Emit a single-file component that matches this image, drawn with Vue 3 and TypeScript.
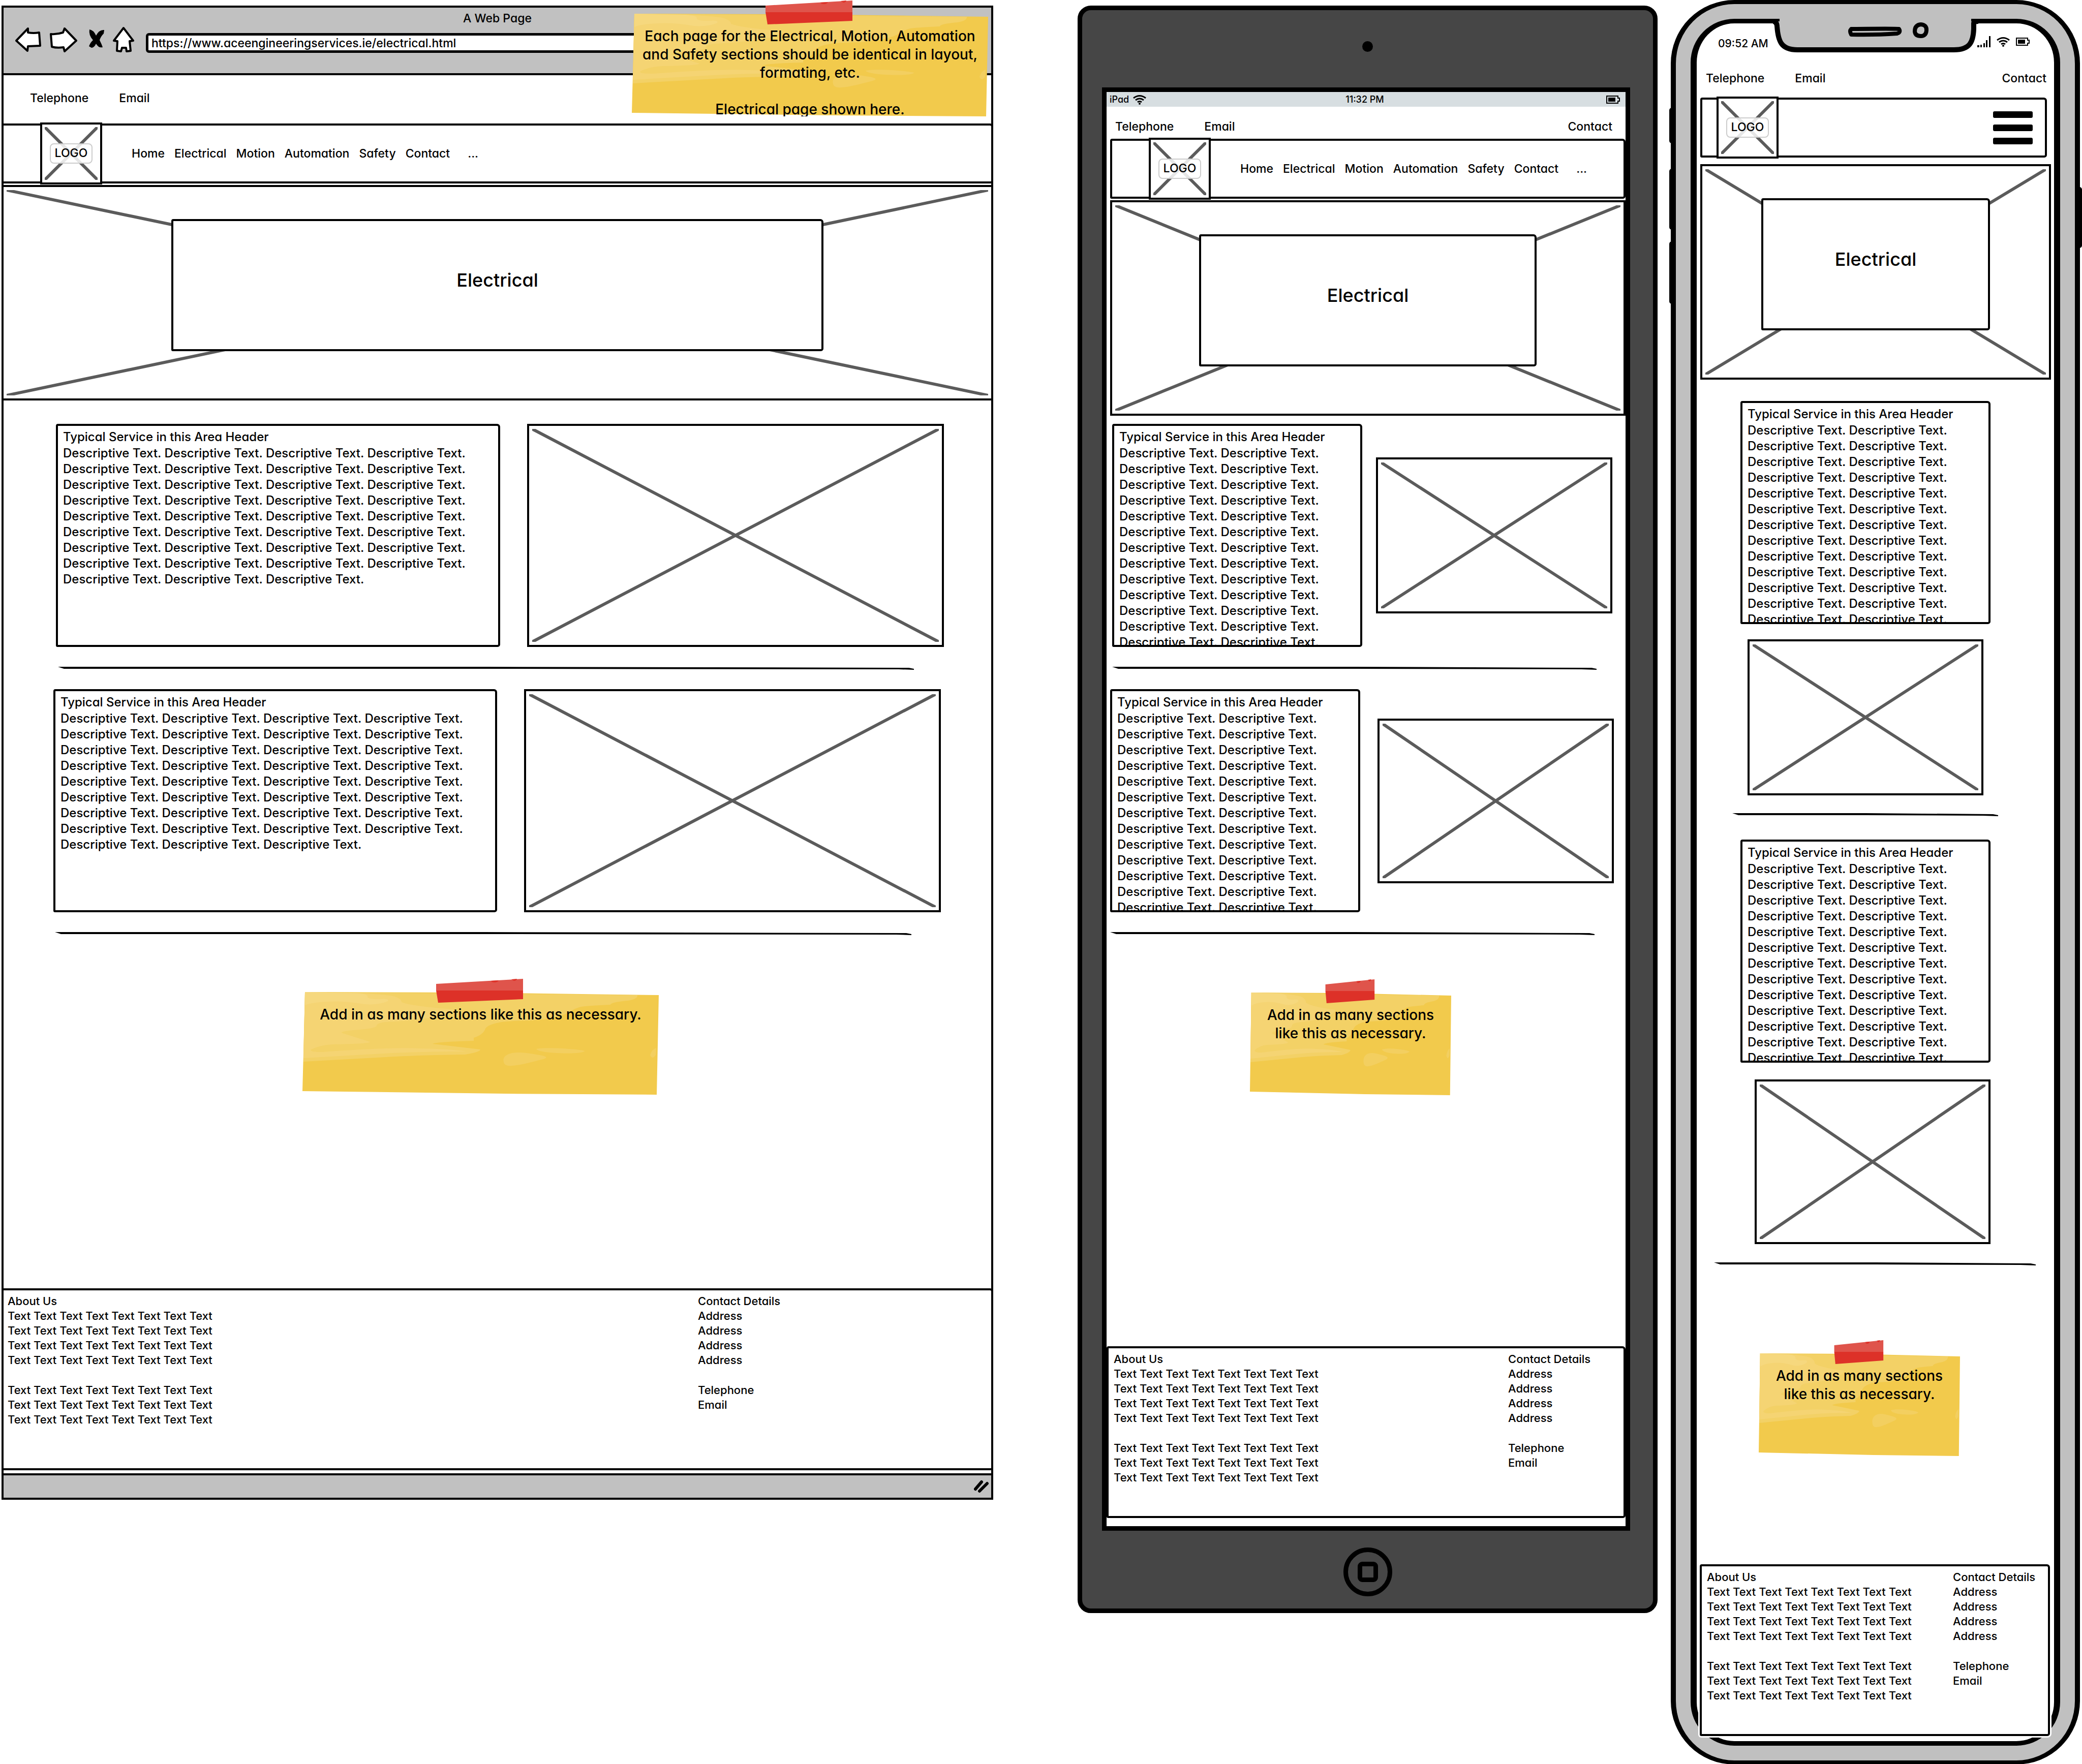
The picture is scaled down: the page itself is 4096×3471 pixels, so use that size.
<script setup lang="ts">
type Kind = 'browser' | 'tablet' | 'phone'

interface Device {
  kind: Kind
  label: string
  description: string
}

const repeat = (text: string, times: number): string => Array<string>(times).fill(text).join(' ')

const devices: Device[] = [
  { kind: 'browser', label: 'Desktop layout', description: repeat('Descriptive Text.', 35) },
  { kind: 'tablet', label: 'Tablet layout', description: repeat('Descriptive Text.', 26) },
  { kind: 'phone', label: 'Phone layout', description: repeat('Descriptive Text.', 26) },
]

const navLinks: string[] = ['Home', 'Electrical', 'Motion', 'Automation', 'Safety', 'Contact']
const services: number[] = [1, 2]
const textLine: string = repeat('Text', 8)
const aboutBlocks: string[][] = [
  [textLine, textLine, textLine, textLine],
  [textLine, textLine, textLine],
]
const contactBlocks: string[][] = [
  ['Address', 'Address', 'Address', 'Address'],
  ['Telephone', 'Email'],
]

// Layers of a sticky note: paper, its sheen, then the tape that holds it.
const noteLayers: { fill: string; d: string }[] = [
  { fill: '#f2ca4c', d: 'M5 0L320 1L701 6L697 202L400 200L0 195L2 120Z' },
  {
    fill: '#f3d166',
    d: 'M5 0L659 6Q660 14 640 17Q606 20 606 25Q560 27 548 29C520 36 530 50 449 56Q395 57 387 60Q365 64 360 72Q356 84 337 90L337 96Q262 98 256 102Q300 107 350 113Q350 118 320 123Q240 124 182 127L2 137Z',
  },
  {
    fill: '#f5d473',
    d: 'M5 0L106 2Q170 5 182 9Q196 14 195 20Q215 28 298 34Q290 52 164 59Q146 61 146 66Q146 72 100 75Q70 78 79 81L133 98Q132 102 60 103Q36 104 17 113Q12 118 40 118Q180 108 230 111Q290 112 322 117Q230 117 160 121L2 130Z',
  },
  {
    fill: '#f6d87e',
    d: 'M5 0L106 2Q128 4 128 8Q126 14 150 14Q172 12 168 18Q150 26 122 24Q80 17 50 19Q20 20 5 26Z',
  },
  {
    fill: '#f3cf60',
    d: 'M396 138C392 124 410 116 440 120C478 125 490 128 470 133C450 138 430 144 412 145C402 146 397 143 396 138ZM460 112C480 108 540 112 556 116C548 121 530 121 500 120Q464 118 460 112ZM684 124Q688 112 696 110L695 124Q688 134 684 124Z',
  },
  { fill: '#df544b', d: 'M263 -16L434 -26V-3H263Z' },
  { fill: '#dd3128', d: 'M263 -3H434V14L267 21Z' },
  { fill: '#dd3128', d: 'M371 -22L386 -23Q384 -19 378 -19Q372 -19 371 -22ZM411 -25L422 -26Q421 -22 416 -22Z' },
]
</script>

<template>
  <main class="board">
    <article v-for="d in devices" :key="d.kind" :class="['device', d.kind]" :aria-label="d.label">
      <header v-if="d.kind === 'browser'" class="chrome">
        <div class="title">A Web Page</div>
        <div class="toolbar">
          <button type="button" aria-label="Back">
            <svg width="51" height="52" class="tool"><path d="M2 28L25 4L25 12Q36 14 47 12L49 38L25 39L24 48Z" /></svg>
          </button>
          <button type="button" aria-label="Forward">
            <svg width="54" height="52" class="tool"><path d="M2 15Q14 16 26 12L29 4L52 28L29 49L27 41Q14 43 4 40Z" /></svg>
          </button>
          <button type="button" aria-label="Stop">
            <svg width="36" height="52">
              <path d="M7 6Q15 7 20 18Q26 6 36 7L35 14Q29 20 27 27Q31 35 33 41Q25 43 20 34Q16 42 11 42L6 39Q9 31 14 27Q5 17 7 6Z" />
            </svg>
          </button>
          <button type="button" aria-label="Home">
            <svg width="42" height="52" class="tool">
              <path d="M21 3L40 28L33 29L35 48L27 49L26 42L18 42L16 49L8 48L9 29L2 28Z" />
            </svg>
          </button>
          <input class="url" type="text" aria-label="Address" value="https://www.aceengineeringservices.ie/electrical.html" />
        </div>
      </header>

      <div v-if="d.kind === 'tablet'" class="bezel">
        <span class="lens"></span>
      </div>

      <template v-if="d.kind === 'phone'">
        <span class="key mute"></span>
        <span class="key louder"></span>
        <span class="key softer"></span>
        <span class="key power"></span>
      </template>

      <div class="screen">
        <svg v-if="d.kind === 'phone'" class="notch" width="400" height="70" viewBox="0 0 400 70">
          <path class="notch-fill" d="M6 5V20C8 44 14 61 46 61H354C386 61 393 45 393 20V5Z" />
          <path class="notch-line" d="M-2 5Q5 5 6 14C8 44 14 61 46 61H354C386 61 392 45 393 20V9Q393 5 402 5" />
          <path class="notch-fill" d="M11 0H388V16H11Z" />
          <path class="speaker" d="M152 20Q148 24 152 31Q200 32 242 29Q250 27 246 20Q240 19 152 20Z" />
          <path class="speaker" d="M289 11Q301 12 300 23Q299 34 289 34Q278 34 277 25Q277 12 289 11Z" />
        </svg>

        <div v-if="d.kind !== 'browser'" class="status">
          <span v-if="d.kind === 'tablet'" class="carrier">
            iPad
            <svg width="28" height="20" viewBox="0 0 28 20" class="wifi">
              <path d="M2 7Q14 -2 26 7M6 11Q14 5 22 11M10 15Q14 12 18 15" /><circle cx="14" cy="18" r="2" />
            </svg>
          </span>
          <time>{{ d.kind === 'tablet' ? '11:32 PM' : '09:52 AM' }}</time>
          <span class="signals">
            <template v-if="d.kind === 'phone'">
              <svg width="26" height="22" viewBox="0 0 26 22">
                <path d="M0 18H4V22H0ZM6 17H9V22H6ZM12 14H15V22H12ZM17 8H20V22H17ZM23 0H26V22H23Z" />
              </svg>
              <svg width="28" height="20" viewBox="0 0 28 20" class="wifi">
                <path d="M2 7Q14 -2 26 7M6 11Q14 5 22 11M10 15Q14 12 18 15" /><circle cx="14" cy="18" r="2" />
              </svg>
            </template>
            <svg width="27" height="16" viewBox="0 0 27 16">
              <path class="shell" d="M1 1H23V5H26V11H23V15H1Z" /><path d="M4 4H18V12H4Z" />
            </svg>
          </span>
        </div>

        <div class="contact-bar">
          <a href="#telephone">Telephone</a>
          <a href="#email">Email</a>
          <a v-if="d.kind !== 'browser'" class="to-right" href="#contact">Contact</a>
        </div>

        <nav class="box nav">
          <div class="logo">
            <svg class="cross" viewBox="0 0 100 100" preserveAspectRatio="none">
              <path d="M0 0L100 100M100 0L0 100" vector-effect="non-scaling-stroke" />
            </svg>
            <span class="logo-label">LOGO</span>
          </div>
          <button v-if="d.kind === 'phone'" type="button" class="menu" aria-label="Menu">
            <span></span><span></span><span></span>
          </button>
          <div v-else class="links">
            <a v-for="link in navLinks" :key="link" :href="'#' + link.toLowerCase()">{{ link }}</a>
            <a class="more" href="#more">...</a>
          </div>
        </nav>

        <section class="hero">
          <svg class="cross" viewBox="0 0 100 100" preserveAspectRatio="none">
            <path d="M0 0L100 100M100 0L0 100" vector-effect="non-scaling-stroke" />
          </svg>
          <h1 class="box hero-title">Electrical</h1>
        </section>

        <template v-for="n in services" :key="n">
          <section :class="['service', 'service-' + n]">
            <div class="box copy">
              <h2>Typical Service in this Area Header</h2>
              <p>{{ d.description }}</p>
            </div>
            <div class="picture">
              <svg class="cross" viewBox="0 0 100 100" preserveAspectRatio="none">
                <path d="M0 0L100 100M100 0L0 100" vector-effect="non-scaling-stroke" />
              </svg>
            </div>
          </section>
          <hr :class="'rule-' + n" />
        </template>

        <aside class="note">
          <svg viewBox="0 -27 701 229" preserveAspectRatio="none">
            <path v-for="(layer, i) in noteLayers" :key="i" :fill="layer.fill" :d="layer.d" />
          </svg>
          <p>Add in as many sections like this as necessary.</p>
        </aside>

        <footer class="box footer">
          <div class="about">
            <h3>About Us</h3>
            <p v-for="(block, i) in aboutBlocks" :key="i">
              <span v-for="(line, j) in block" :key="j">{{ line }}</span>
            </p>
          </div>
          <div class="details">
            <h3>Contact Details</h3>
            <p v-for="(block, i) in contactBlocks" :key="i">
              <span v-for="(line, j) in block" :key="j">{{ line }}</span>
            </p>
          </div>
        </footer>
      </div>

      <div v-if="d.kind === 'browser'" class="statusbar">
        <svg width="30" height="26" viewBox="0 0 30 26"><path d="M3 18L15 4M11 22L26 7" /></svg>
      </div>

      <div v-if="d.kind === 'tablet'" class="chin">
        <button type="button" class="home-key" aria-label="Home"><span></span></button>
      </div>

      <aside v-if="d.kind === 'browser'" class="note pinned">
        <svg viewBox="0 -27 701 229" preserveAspectRatio="none">
          <path v-for="(layer, i) in noteLayers" :key="i" :fill="layer.fill" :d="layer.d" />
        </svg>
        <p>
          Each page for the Electrical, Motion, Automation and Safety sections should be identical in layout, formating,
          etc.<br /><br />Electrical page shown here.
        </p>
      </aside>
    </article>
  </main>
</template>

<style>
body {
  background: #fff;
}
</style>

<style scoped>
/* three devices side by side, with free space between them */
.board {
  display: grid;
  grid-template-columns: minmax(0, 1951fr) 166px minmax(0, 1141fr) 26px minmax(0, 805fr);
  align-items: start;
  padding: 0 4px 0 3px;
  color: #000;
  font-family: Inter, 'Liberation Sans', sans-serif;
  font-feature-settings: 'cv11';
  font-size: 23px;
  font-weight: 450;
  line-height: 30px;
}
.board *,
.board {
  box-sizing: border-box;
}
h1,
h2,
h3,
p {
  margin: 0;
  font: inherit;
}
a {
  color: inherit;
  text-decoration: none;
}
button {
  display: block;
  border: 0;
  padding: 0;
  background: none;
}
svg {
  display: block;
}

/* shared wireframe parts */
.box {
  border: 4px solid #000;
  border-radius: 4px 6px 5px 3px;
  background: #fff;
}
.cross {
  width: 100%;
  height: 100%;
  fill: none;
  stroke: #5b5b5b;
  stroke-width: 6px;
}
.contact-bar {
  display: flex;
  gap: 60px;
}
.to-right {
  margin-left: auto;
}
.nav {
  display: flex;
  align-items: center;
  height: 118px;
  padding-left: 72px;
}
.logo {
  display: grid;
  place-items: center;
  width: 122px;
  height: 122px;
  margin: -6px 0;
  border: 4px solid #000;
  padding: 5px;
  background: #fff;
}
.logo > * {
  grid-area: 1 / 1;
}
.logo .cross {
  height: 104px;
}
.logo-label {
  border: 2px solid #ccc;
  border-radius: 8px;
  padding: 2px 8px 4px;
  background: rgba(255, 255, 255, 0.85);
}
.links {
  display: flex;
  gap: 19px;
  margin-left: 58px;
}
.more {
  margin-left: 16px;
}
.hero {
  display: grid;
  height: 424px;
  border: 4px solid #000;
  padding: 6px;
  background: #fff;
}
.hero > * {
  grid-area: 1 / 1;
}
.hero .cross {
  height: 404px;
}
.hero-title {
  display: grid;
  place-items: center;
  justify-self: center;
  width: calc(66% + 8px);
  height: 260px;
  margin-top: 57px;
  padding-bottom: 20px;
  font-size: 36px;
}
.service {
  display: grid;
  align-items: center;
}
.copy {
  height: 439px;
  padding: 6px 10px;
  overflow: hidden;
  font-size: 24px;
  line-height: 31px;
}
.copy h2 {
  line-height: 32px;
}
.picture {
  border: 4px solid #000;
  padding: 6px;
}
hr {
  height: 6px;
  border: 0;
  background: #000;
  clip-path: polygon(0 0, 50% 0, calc(100% - 10px) 2px, 100% 4px, 100% 6px, calc(100% - 30px) 5px, 50% 4px, 12px 4px);
}
.note {
  display: grid;
}
.note > * {
  grid-area: 1 / 1;
}
.note > svg {
  width: 100%;
  height: 229px;
}
.note p {
  height: 202px;
  margin-top: 27px;
  padding: 26px 20px 0;
  overflow: hidden;
  font-size: 28px;
  line-height: 36px;
  text-align: center;
}
.footer {
  display: flex;
  justify-content: space-between;
  padding: 6px 0 0 8px;
  font-size: 22px;
  line-height: 29px;
}
.footer h3 {
  line-height: 30px;
}
.footer p + p {
  margin-top: 30px;
}
.footer span {
  display: block;
}

/* desktop browser */
.browser {
  position: relative;
  grid-column: 1;
  margin-top: 11px;
  border: 4px solid #000;
}
.chrome {
  height: 133px;
  border-bottom: 4px solid #000;
  padding-top: 6px;
  background: #c1c1c1;
}
.title {
  line-height: 31px;
  text-align: center;
}
.toolbar {
  display: flex;
  align-items: flex-end;
  gap: 17px;
  padding-left: 23px;
}
.tool path {
  fill: #fff;
  stroke: #000;
  stroke-width: 4px;
  stroke-linejoin: round;
}
.url {
  flex: 1;
  height: 39px;
  margin: 0 240px 0 6px;
  border: 5px solid #000;
  border-radius: 6px;
  padding: 0 6px;
  background: #fff;
  color: inherit;
  font: inherit;
  font-feature-settings: inherit;
}
.browser .contact-bar {
  height: 95px;
  padding: 30px 0 0 52px;
}
.browser .nav,
.browser .hero,
.browser .footer {
  margin-left: -4px;
  margin-right: -4px;
}
.browser .hero {
  margin-top: 3px;
}
.browser .service {
  grid-template-columns: minmax(0, 874fr) minmax(0, 820fr);
  column-gap: 53px;
  margin-top: 38px;
  padding: 0 93px 0 103px;
}
.browser .service-1 {
  margin-top: 46px;
}
.browser .service-2 {
  padding: 0 99px 0 98px;
}
.browser .picture {
  height: 439px;
}
.browser hr {
  margin: 39px 152px 0 107px;
}
.browser .rule-2 {
  margin: 39px 157px 0 101px;
}
.browser .note {
  width: 701px;
  margin: 85px 0 0 588px;
}
.browser .footer {
  height: 358px;
  margin-top: 381px;
}
.browser .details {
  width: 577px;
}
.browser .pinned {
  position: absolute;
  top: -15px;
  right: 6px;
  margin: 0;
}
.statusbar {
  display: flex;
  align-items: center;
  justify-content: flex-end;
  height: 48px;
  margin-top: 6px;
  border-top: 4px solid #000;
  padding-right: 4px;
  background: #c1c1c1;
}
.statusbar path {
  fill: none;
  stroke: #000;
  stroke-width: 6px;
  stroke-linecap: round;
}

/* tablet */
.tablet {
  grid-column: 3;
  margin-top: 11px;
  border: 9px solid #000;
  border-radius: 26px;
  padding: 0 45px 0 39px;
  background: #464646;
}
.bezel {
  display: flex;
  justify-content: center;
  height: 152px;
  padding: 61px 0 0 6px;
}
.lens {
  width: 21px;
  height: 21px;
  border-radius: 50%;
  background: #000;
}
.tablet .screen {
  border: 9px solid #000;
  padding-bottom: 16px;
  background: #fff;
}
.status {
  display: flex;
  align-items: center;
  font-size: 21px;
}
.tablet .status {
  display: grid;
  grid-template-columns: 1fr auto 1fr;
  height: 29px;
  padding: 0 11px 0 6px;
  background: #d7dee1;
  font-size: 18px;
}
.carrier,
.signals {
  display: flex;
  align-items: center;
  gap: 7px;
}
.signals {
  justify-content: flex-end;
}
.wifi path {
  fill: none;
  stroke: #000;
  stroke-width: 3px;
}
.shell {
  fill: none;
  stroke: #000;
  stroke-width: 2px;
}
.tablet .contact-bar {
  height: 63px;
  padding: 24px 26px 0 17px;
}
.tablet .nav {
  margin-left: 7px;
}
.tablet .hero {
  margin: 3px 0 0 7px;
}
.tablet .service {
  grid-template-columns: minmax(0, 492fr) minmax(0, 465fr);
  column-gap: 27px;
  margin-top: 38px;
  padding: 0 26px 0 11px;
}
.tablet .service-1 {
  margin-top: 16px;
}
.tablet .service-2 {
  column-gap: 34px;
  padding: 0 23px 0 7px;
}
.tablet .picture {
  height: 307px;
}
.tablet .service-2 .picture {
  height: 324px;
}
.tablet hr {
  margin: 39px 57px 0 11px;
}
.tablet .rule-2 {
  margin: 39px 61px 0 7px;
}
.tablet .note {
  width: 396px;
  margin: 86px 0 0 282px;
}
.tablet .footer {
  height: 338px;
  margin-top: 494px;
  padding-left: 10px;
}
.tablet .details {
  width: 227px;
}
.chin {
  display: flex;
  justify-content: center;
  height: 153px;
  padding: 33px 0 0 6px;
}
.home-key {
  display: grid;
  place-items: center;
  width: 96px;
  height: 96px;
  border: 9px solid #000;
  border-radius: 50%;
}
.home-key span {
  width: 40px;
  height: 40px;
  border: 9px solid #000;
  border-radius: 9px;
}

/* phone */
.phone {
  position: relative;
  grid-column: 5;
  border: solid #000;
  border-width: 8px 10px;
  border-radius: 125px;
  padding: 29px;
  background: #c0c0c0;
}
.phone .screen {
  position: relative;
  border: solid #000;
  border-width: 9px 12px;
  border-radius: 86px;
  padding-bottom: 10px;
  background: #fff;
}
.key {
  position: absolute;
  left: -13px;
  width: 10px;
  border-radius: 5px;
  background: #000;
}
.mute {
  top: 204px;
  height: 70px;
}
.louder {
  top: 324px;
  height: 120px;
}
.softer {
  top: 467px;
  height: 123px;
}
.power {
  top: 360px;
  right: -14px;
  left: auto;
  height: 120px;
}
.notch {
  position: absolute;
  top: -9px;
  left: 50%;
  margin-left: -200px;
  overflow: visible;
}
.notch-fill {
  fill: #c0c0c0;
}
.notch-line {
  fill: none;
  stroke: #000;
  stroke-width: 10px;
}
.speaker {
  fill: #c0c0c0;
  stroke: #000;
  stroke-width: 8px;
  stroke-linejoin: round;
}
.phone .status {
  justify-content: space-between;
  height: 69px;
  padding: 10px 48px 0 42px;
}
.phone .signals {
  gap: 11px;
  padding-bottom: 8px;
}
.phone .contact-bar {
  height: 77px;
  padding: 24px 15px 0 18px;
}
.phone .nav {
  justify-content: space-between;
  margin: 0 14px 0 7px;
  padding: 0 24px 0 28px;
}
.menu {
  display: grid;
  gap: 13px;
  width: 78px;
}
.menu span {
  height: 13px;
  border-radius: 3px;
  background: #000;
}
.phone .hero {
  margin: 13px 6px 0 7px;
}
.phone .service {
  row-gap: 30px;
  margin-top: 46px;
  padding: 0 125px 0 86px;
}
.phone .service-1 {
  margin-top: 42px;
}
.phone .picture {
  height: 307px;
  margin: 0 14px;
}
.phone .service-2 .picture {
  height: 324px;
  margin: 3px 0 0 28px;
}
.phone hr {
  margin: 35px 110px 0 70px;
}
.phone .rule-2 {
  margin: 36px 36px 0 34px;
}
.phone .note {
  width: 396px;
  margin: 146px 0 0 122px;
}
.phone .footer {
  height: 338px;
  margin: 213px 8px 0 6px;
  padding-left: 10px;
  box-shadow: 0 0 0 3px #fff;
}
.phone .details {
  width: 187px;
}
</style>
